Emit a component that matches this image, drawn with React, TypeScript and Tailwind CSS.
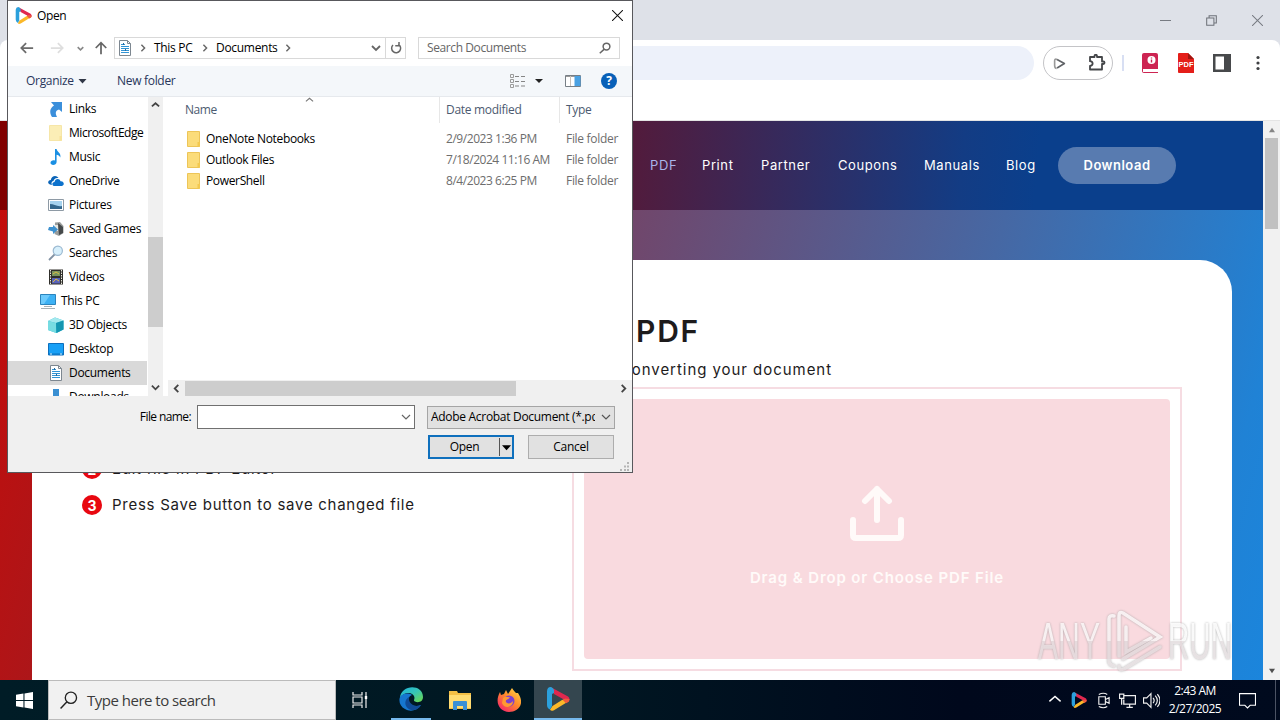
import { ReactNode } from "react"

const navLinks = [
  { label: "PDF", className: "w-[52px] text-[#a9b4ea]" },
  { label: "Print", className: "w-[59px] text-white" },
  { label: "Partner", className: "w-[77px] text-white" },
  { label: "Coupons", className: "w-[86px] text-white" },
  { label: "Manuals", className: "w-[82px] text-white" },
  { label: "Blog", className: "w-[52px] text-white" },
]

const files = [
  { name: "OneNote Notebooks", date: "2/9/2023 1:36 PM" },
  { name: "Outlook Files", date: "7/18/2024 11:16 AM" },
  { name: "PowerShell", date: "8/4/2023 6:25 PM" },
]

function Icon({ children, className = "w-4 h-4" }: { children: ReactNode, className?: string }) {
  return (
    <svg viewBox="0 0 16 16" className={`${className} shrink-0`} fill="none">{children}</svg>
  )
}

function Chevron({ dir, className = "w-2 h-2", stroke = "#555", width = 1.8 }: { dir: "up" | "down" | "left" | "right", className?: string, stroke?: string, width?: number }) {
  const paths = {
    up: "M1 6 5 2.5 9 6",
    down: "M1 3 5 7 9 3",
    left: "M7 1 3 5 7 9",
    right: "M3 1 7 5 3 9",
  }
  return (
    <svg viewBox="0 0 10 10" className={`${className} shrink-0`} fill="none" stroke={stroke} strokeWidth={width}><path d={paths[dir]} /></svg>
  )
}

function PlayLogo({ className }: { className: string }) {
  return (
    <svg viewBox="0 0 24 24" className={`${className} shrink-0`}>
      <path d="M5 .3 22 9.500q2.500 2 .8 5L20.500 16 17 12 8 7z" fill="#e0284f" />
      <path d="M23 14 8 23.300q-3 1.400-4-.8L6.500 19 16 13l4-1z" fill="#fbb829" />
      <path d="M19 11.500 23.500 12q0 2-1.500 3l-2 1.200-3-3z" fill="#ef5a3c" />
      <path d="M1 4Q1.500-.5 5.500.2 7 1 8 3v3L6 7v12l-2 3.500Q1 21 1 18z" fill="#2ba0dc" />
    </svg>
  )
}

function DocumentIcon() {
  return (
    <Icon>
      <path d="M2.500.5h8l3 3v12h-11z" fill="#fff" stroke="#7d8790" />
      <path d="M10.500.5v3h3" stroke="#7d8790" />
      <path d="M4 4.500h4M4 6.500h8M4 8.500h8M4 10.500h8M4 12.500h8" stroke="#3294d4" />
      <path d="M6.500 3v2M8.500 9v2" stroke="#27699c" />
    </Icon>
  )
}

function FolderIcon({ pale = false }: { pale?: boolean }) {
  return (
    <Icon>
      <path d="M1.500.5h12v15h-12z" fill={pale ? "#fbeeb6" : "#fbdc7a"} stroke={pale ? "#f6e6a8" : "#edc558"} />
      <path d="M11.500 11h2.500v4.500h-2.500z" fill={pale ? "#f7e39b" : "#f3c94f"} />
    </Icon>
  )
}

const sidebar: { label: string, icon: ReactNode, root?: boolean, active?: boolean }[] = [
  { label: "Links", icon: <Icon><path d="M3 1h11v10l-3-2.500C7.500 9.500 7 12 9 16H4C1 11 2 7 6 4.500z" fill="#3b8fdb" /></Icon> },
  { label: "MicrosoftEdge", icon: <FolderIcon pale /> },
  { label: "Music", icon: <Icon><path d="M7 0h1.600c.4 3 4.900 4 3.600 8.500C11.500 6.500 10 6 8.600 5.800V13c0 3.500-6.100 4-6.100.8 0-2.200 2.500-3 4.500-2.300z" fill="#1a8fe3" /></Icon> },
  { label: "OneDrive", icon: <Icon><path d="M2 11.500c-3-1-2-4.500.8-4.500C3.500 2.500 8.500 1.500 10.500 5 7.500 4.500 5.800 6 5.500 8 3.500 8.300 3 10.500 4 12z" fill="#0a64b8" /><path d="M6 13c-2.500-.5-2-4 .5-4 .5-3.500 5-4 6 -.8 3.500-.4 4.500 4 1.500 4.800z" fill="#0d72cc" /></Icon> },
  { label: "Pictures", icon: <Icon><path d="M.5 2.500h15v11H.5z" fill="#fff" stroke="#8e9aa5" /><path d="M2 4h12v8H2z" fill="#a6d3ef" /><path d="M2 7c4 0 7 3 12 2v3H2z" fill="#34688d" /></Icon> },
  { label: "Saved Games", icon: <Icon><path d="M7 1.500 12 1l3.500 4v7L11 15l-4.500-2z" fill="#9a9d9c" /><path d="M10 2l5 4v6l-4 2z" fill="#45494b" /><path d="M7 4h3v6H7z" fill="#e6e8e4" /><path d="M1 6h4V4l5 4.500L5 13v-2.500L0 9z" fill="#3d91cf" /></Icon> },
  { label: "Searches", icon: <Icon><path d="M1 15 7 9" stroke="#8292a4" strokeWidth="1.800" /><circle cx="9.800" cy="5.800" r="4.600" fill="#d7effb" stroke="#9bb9d1" strokeWidth="1.200" /></Icon> },
  { label: "Videos", icon: <Icon><path d="M1 .5h14v15H1z" fill="#302f2b" /><path d="M2.500 1v15M13.500 1v15" stroke="#e8e8dc" strokeDasharray="1.500 1" /><path d="M4 2h8v5H4z" fill="#77935d" /><path d="M4 9h8v5.500H4z" fill="#5963b8" /><path d="M5 5l3-2 3 2M5 13l3-3 3 2" stroke="#dcbd45" /></Icon> },
  { label: "This PC", root: true, icon: <Icon><path d="M.5 1.500h15v10H.5z" fill="#3db1f4" stroke="#2b84bd" /><path d="M1 2h9L4 11H1z" fill="#6ccafc" /><path d="M4 13.500h8" stroke="#a7b1b7" /><path d="M1 15.500h14" stroke="#a7b1b7" /></Icon> },
  { label: "3D Objects", icon: <Icon><path d="M0 4l7-3.500 8.500 3v9L8.500 16 0 13z" fill="#35bcd2" /><path d="M0 4l7-3.500 8.500 3L8 6z" fill="#a3e9ee" /><path d="M8 6v10l-8-3V4z" fill="#77dce2" /><path d="M8 6l7.500-2.500v9L8.500 16z" fill="#1496b1" /></Icon> },
  { label: "Desktop", icon: <Icon><path d="M.5 2.500h15v11.500H.5z" fill="#18a0f6" stroke="#0d6fbd" /><path d="M1 13h14" stroke="#0873bf" /><path d="M2 13h2M12 13h2" stroke="#d8f1ff" /></Icon> },
  { label: "Documents", active: true, icon: <DocumentIcon /> },
  { label: "Downloads", icon: <Icon><path d="M5 0h6v9h4l-7 7-7-7h4z" fill="#3a8fd2" /></Icon> },
]

function Browser() {
  return (
    <div className="flex h-[680px] flex-col bg-[#dee1e8]">
      <div className="flex h-10 shrink-0 items-center justify-end gap-[35px] pr-[17px]">
        <Icon className="w-[11px] h-[11px]"><path d="M0 8h16" stroke="#777b82" strokeWidth="1.500" /></Icon>
        <Icon className="w-[11px] h-[11px]"><path d="M1 4.500h10.500V15H1zM4.500 4V1H15v10.500h-3" stroke="#6e7279" strokeWidth="1.500" /></Icon>
        <Icon className="w-[11px] h-[11px]"><path d="M0 0l16 16M16 0 0 16" stroke="#777b82" strokeWidth="1.500" /></Icon>
      </div>
      <div className="h-[81px] shrink-0 rounded-t-lg border-b border-[#e4e4e4] bg-white pt-1.5">
        <div className="flex h-[34px] items-center">
          <div className="ml-24 h-[34px] w-[938px] rounded-r-full bg-[#edf1fa]" />
          <div className="ml-[9px] flex h-[34px] w-[70px] items-center justify-between rounded-full border border-[#c4c4c7] pl-[9px] pr-[6px]">
            <Icon className="w-[13px] h-[13px]"><path d="M5 3 14 8 5 13.500" stroke="#606367" strokeWidth="2" strokeLinejoin="round" /><path d="M5 3C2.500 2 2 3 2 5v5c0 3 .5 4 2.500 4" stroke="#999" strokeWidth="2" /></Icon>
            <svg viewBox="0 0 18 18" className="h-[18px] w-[18px]" fill="none" stroke="#444649" strokeWidth="1.800" strokeLinejoin="round"><path d="M2 3h4.500V2a1 1 0 0 1 2.500 0v1h5v4.500h1.300a1.200 1.200 0 0 1 0 2.500H14v5.500H2v-3.700c3.500-.3 3.500-4.300 0-4.600z" /></svg>
          </div>
          <div className="ml-[9px] h-4 w-0.5 bg-[#d8dff3]" />
          <svg viewBox="0 0 16 20" className="ml-[18px] h-5 w-4"><path d="M2 0h12q2 0 2 2v18H2q-2 0-2-2V2q0-2 2-2" fill="#cd2452" /><path d="M1 16h15v3H1z" fill="#fff" /><circle cx="9.500" cy="7" r="4" fill="#fff" /><path d="M9.500 6.500v3M9.500 4.500v1" stroke="#cd2452" strokeWidth="1.400" /></svg>
          <svg viewBox="0 0 16 20" className="ml-5 h-5 w-4"><path d="M1 0h9l6 6v14H1q-1 0-1-1V1q0-1 1-1" fill="#e41e19" /><path d="M10 0l6 6h-6z" fill="#9f1510" /><text x="8" y="13.500" textAnchor="middle" fill="#fff" fontFamily="Liberation Sans" fontWeight="700" fontSize="7.500">PDF</text></svg>
          <svg viewBox="0 0 18 18" className="ml-[19px] h-[18px] w-[18px]"><path d="M0 0h18v18H0z" fill="#47494b" /><path d="M2.500 2.500h8.500v13H2.500z" fill="#fff" /></svg>
          <svg viewBox="0 0 4 16" className="ml-[25px] h-4 w-1" fill="#3e4043"><circle cx="2" cy="2.500" r="1.600" /><circle cx="2" cy="8" r="1.600" /><circle cx="2" cy="13.500" r="1.600" /></svg>
        </div>
      </div>
      <div className="flex min-h-0 flex-1">
        <div className="flex w-[1263px] flex-col overflow-hidden bg-[linear-gradient(105deg,#c60b09_0%,#a8181c_15%,#70476c_47%,#4668a4_73%,#2082d5_94%,#1b85dc_100%)]">
          <header className="flex h-[89px] shrink-0 items-center bg-[linear-gradient(95deg,#800000_0%,#80040a_28%,#521b3c_50%,#133c84_76%,#0a3f8c_82%)] pl-[650px] text-[13px] tracking-[0.6px]">
            {navLinks.map((link) => (
              <a key={link.label} className={`${link.className} whitespace-nowrap`}>{link.label}</a>
            ))}
            <button className="h-[37px] w-[118px] rounded-full bg-[#587bb0] text-[13px] font-semibold tracking-[0.5px] text-white">Download</button>
          </header>
          <main className="mt-[50px] ml-8 flex w-[1200px] flex-1 rounded-t-[32px] bg-white text-[#1d1b1c]">
            <div className="w-[540px] shrink-0 pl-[50px] pt-[199px] text-[15px] tracking-[0.73px]">
              {["Edit file in PDF Editor", "Press Save button to save changed file"].map((step, i) => (
                <div key={step} className="flex h-9 items-start">
                  <span className="mr-2.5 flex h-5 w-5 items-center justify-center rounded-full bg-[#e80710] text-[14px] font-bold tracking-normal text-white">{i + 2}</span>
                  <span className="whitespace-nowrap leading-5">{step}</span>
                </div>
              ))}
            </div>
            <div className="w-[610px] shrink-0">
              <h1 className="pt-[51px] pl-[64px] text-[30px] font-semibold leading-10 tracking-[1.8px]">PDF</h1>
              <p className="flex h-[36px] w-[260px] justify-end whitespace-nowrap pt-[9px] text-[15px] leading-5 tracking-[0.95px]">Start converting your document</p>
              <div className="h-[284px] border-2 border-[#f6dce2] p-2.5">
                <div className="flex h-[260px] w-[586px] flex-col items-center rounded bg-[#f9dadf] pt-[86px] text-[#fffaf9]">
                  <svg viewBox="0 0 56 56" className="h-14 w-14" fill="none" stroke="currentColor" strokeWidth="6" strokeLinecap="round" strokeLinejoin="round"><path d="M28 35V4M16 16 28 4l12 12M4 35v15q0 3 3 3h42q3 0 3-3V35" /></svg>
                  <div className="mt-[27px] text-[15px] font-semibold leading-5 tracking-[0.88px]">Drag &amp; Drop or Choose PDF File</div>
                </div>
              </div>
            </div>
          </main>
        </div>
        <div className="flex w-[17px] flex-col items-center justify-between bg-[#f1f1f1] py-1.5">
          <div className="flex flex-col items-center gap-[5px]">
            <Icon className="h-1.5 w-2"><path d="M0 14 8 2l8 12z" fill="#858585" /></Icon>
            <div className="h-[91px] w-[13px] bg-[#c1c1c1]" />
          </div>
          <Icon className="h-1.5 w-2"><path d="M0 2 8 14 16 2z" fill="#505050" /></Icon>
        </div>
      </div>
    </div>
  )
}

function OpenDialog() {
  return (
    <div className="absolute left-[7px] top-0 flex h-[473px] w-[626px] flex-col border border-[#58585c] bg-white font-['Open_Sans','Noto_Sans',sans-serif] text-[12px] tracking-[-0.3px] text-black">
      <div className="flex h-[29px] shrink-0 items-center pl-[7px] pr-[9px]">
        <PlayLogo className="h-[17px] w-[17px]" />
        <span className="ml-[5px] flex-1 tracking-[-0.4px]">Open</span>
        <Icon className="h-[11px] w-[11px]"><path d="M0 0l16 16M16 0 0 16" stroke="#111" strokeWidth="1.500" /></Icon>
      </div>
      <div className="flex h-[36px] shrink-0 items-center">
        <Icon className="ml-3 h-[14px] w-[14px]"><path d="M15 8H2M7 2.500 1.500 8 7 13.500" stroke="#6b6b6b" strokeWidth="2" /></Icon>
        <Icon className="ml-4 h-[14px] w-[14px]"><path d="M1 8h13M9 2.500 14.500 8 9 13.500" stroke="#dedede" strokeWidth="2" /></Icon>
        <Chevron dir="down" className="ml-[13px] h-[7px] w-[7px]" stroke="#888" width={2.2} />
        <Icon className="ml-[10px] h-[14px] w-[14px]"><path d="M8 15V2M2 8l6-6 6 6" stroke="#666" strokeWidth="2" /></Icon>
        <div className="ml-1.5 flex h-[22px] w-[292px] items-center border border-[#d9d9d9] pl-[2px]">
          <DocumentIcon />
          <Chevron dir="right" className="ml-[6px] h-[8px] w-[8px]" stroke="#666" />
          <span className="ml-[7px] w-[39px] whitespace-nowrap">This PC</span>
          <Chevron dir="right" className="ml-[8px] h-[8px] w-[8px]" stroke="#666" />
          <span className="ml-[7px] w-[61px]">Documents</span>
          <Chevron dir="right" className="ml-[7px] h-[8px] w-[8px]" stroke="#666" />
          <Chevron dir="down" className="ml-auto h-[10px] w-[10px]" stroke="#666" />
          <div className="ml-[4px] flex h-5 w-[20px] items-center justify-center border-l border-[#d9d9d9]">
            <Icon className="h-3 w-3"><path d="M12 4a6 6 0 1 1-7-1M4 0v5h5" stroke="#666" strokeWidth="2" transform="matrix(-1 0 0 1 16 0)" /></Icon>
          </div>
        </div>
        <div className="ml-3 flex h-[22px] w-[202px] items-center justify-between border border-[#d9d9d9] pl-2 pr-2 text-[#666]">
          <span className="tracking-[-0.4px]">Search Documents</span>
          <Icon className="h-3 w-3"><circle cx="10" cy="6" r="4.500" stroke="#666" strokeWidth="2" /><path d="M7 9.500 1 15" stroke="#666" strokeWidth="2" /></Icon>
        </div>
      </div>
      <div className="flex h-[31px] shrink-0 items-center border-b border-[#e6e9ed] bg-[#f4f7fa] pl-[18px] pr-[15px] text-[#28365b]">
        <span className="w-[48px]">Organize</span>
        <Icon className="ml-[4px] h-2 w-[9px]"><path d="M0 4h16L8 13z" fill="#303746" /></Icon>
        <span className="ml-[30px] flex-1">New folder</span>
        <Icon><path d="M.5 1.500h3v3h-3zM.5 6.500h3v3h-3zM.5 11.500h3v3h-3z" stroke="#9b9b9b" /><path d="M5 3.500h4M11 3.500h4M5 8.500h4M11 8.500h4M5 13h4M11 13h4" stroke="#858585" /></Icon>
        <Icon className="ml-[9px] h-2 w-2"><path d="M0 4h16L8 12z" fill="#222" /></Icon>
        <Icon className="ml-[22px] h-4 w-4"><path d="M.5 2.500h15v11H.5z" fill="#fff" stroke="#777f86" /><path d="M1 3.500h14" stroke="#999" /><path d="M9.500 3h6v10h-6z" fill="#4aa1e2" /><path d="M5.500 3v10" stroke="#c9c1b9" /></Icon>
        <span className="ml-5 flex h-4 w-4 items-center justify-center rounded-full bg-[#0860b8] text-[12px] font-bold tracking-normal text-white">?</span>
      </div>
      <div className="flex h-[299px] shrink-0">
        <div className="h-[299px] w-[139px] shrink-0 overflow-hidden">
          {sidebar.map((item) => (
            <div key={item.label} className={`${item.root ? "pl-8" : "pl-10"} ${item.active ? "bg-[#d9d9d9]" : ""} flex h-6 items-center gap-[5px] whitespace-nowrap`}>
              {item.icon}
              <span className={item.label === "MicrosoftEdge" ? "tracking-[-0.45px]" : ""}>{item.label}</span>
            </div>
          ))}
        </div>
        <div className="ml-[1px] flex h-[299px] w-[15px] shrink-0 flex-col items-center bg-[#f0f0f0] py-1">
          <Chevron dir="up" className="h-[9px] w-[9px]" stroke="#444" width={2} />
          <div className="mt-[127px] h-[90px] w-[15px] bg-[#cdcdcd]" />
          <Chevron dir="down" className="mt-auto h-[9px] w-[9px]" stroke="#444" width={2} />
        </div>
        <div className="ml-[5px] flex flex-1 flex-col">
          <div className="flex h-[26px] text-[#4c5a70]">
            <div className="flex w-[272px] items-center border-r border-[#e7e7e7] pl-[17px]">
              <span className="w-[120px] tracking-[-0.45px]">Name</span>
              <Chevron dir="up" className="mb-[19px] h-[9px] w-[9px]" stroke="#777" width={1.200} />
            </div>
            <div className="flex w-[120px] items-center border-r border-[#e7e7e7] pl-1.5">Date modified</div>
            <div className="flex items-center pl-1.5">Type</div>
          </div>
          <div className="mt-[5px] flex-1">
            {files.map((file) => (
              <div key={file.name} className="flex h-[21px] items-center whitespace-nowrap pl-[18px]">
                <FolderIcon />
                <span className="ml-[4px] w-[240px] tracking-[-0.35px]">{file.name}</span>
                <span className="w-[120px] tracking-[-0.45px] text-[#6d6d6d]">{file.date}</span>
                <span className="tracking-[-0.3px] text-[#6d6d6d]">File folder</span>
              </div>
            ))}
          </div>
          <div className="flex h-4 items-center bg-[#f0f0f0] pl-1 pr-1">
            <Chevron dir="left" className="h-[9px] w-[9px]" stroke="#444" width={2} />
            <div className="ml-1 h-[15px] w-[331px] bg-[#cdcdcd]" />
            <Chevron dir="right" className="ml-auto h-[9px] w-[9px]" stroke="#444" width={2} />
          </div>
        </div>
      </div>
      <div className="flex flex-1 flex-col bg-[#f0f0f0] pt-[9px]">
        <div className="flex h-6 items-center">
          <span className="w-[183px] text-right tracking-[-0.6px]">File name:</span>
          <div className="ml-[6px] flex h-6 w-[218px] items-center justify-end border border-[#707070] bg-white pr-[3px]">
            <Chevron dir="down" className="h-[10px] w-[10px]" stroke="#666" width={1.200} />
          </div>
          <div className="ml-3 flex h-[23px] w-[188px] items-center border border-[#a5a5a5] bg-[#e1e1e1] pl-[3px] pr-[3px]">
            <span className="w-[164px] overflow-hidden whitespace-nowrap">Adobe Acrobat Document (*.pdf)</span>
            <Chevron dir="down" className="ml-auto h-[10px] w-[10px]" stroke="#555" width={1.200} />
          </div>
        </div>
        <div className="mt-1.5 flex h-6 pl-[420px]">
          <button className="flex h-6 w-[86px] items-center border-2 border-[#0f70bd] bg-[#e1e1e1]">
            <span className="flex-1">Open</span>
            <span className="flex h-[18px] w-[13px] items-center justify-center border-l border-[#555]">
              <Icon className="h-[9px] w-[9px]"><path d="M0 4h16L8 13z" fill="#000" /></Icon>
            </span>
          </button>
          <button className="ml-[14px] h-6 w-[86px] border border-[#adadad] bg-[#e1e1e1]">Cancel</button>
        </div>
        <div className="flex justify-end pr-[3px]">
          <svg viewBox="0 0 9 9" className="mt-[3px] h-[9px] w-[9px]" fill="#b5b5b5"><path d="M7 0h2v2H7zM4 3.500h2v2H4zM7 3.500h2v2H7zM0 7h2v2H0zM4 7h2v2H4zM7 7h2v2H7z" /></svg>
        </div>
      </div>
    </div>
  )
}

function Watermark() {
  return (
    <div className="absolute left-[1036px] top-[608px] flex h-[66px] w-[196px] items-center opacity-80">
      <svg viewBox="0 0 196 66" className="h-[66px] w-[196px] drop-shadow-[0_0_1px_#999]">
        <defs>
          <linearGradient id="mark" x1="0" y1="0" x2="0" y2="66" gradientUnits="userSpaceOnUse">
            <stop offset="0.500" stopColor="#fff" stopOpacity="0.900" />
            <stop offset="0.500" stopColor="#e6dfe1" stopOpacity="0.900" />
          </linearGradient>
        </defs>
        <g fill="url(#mark)" fontFamily="Liberation Sans Narrow, Liberation Sans" fontSize="51">
          <text x="2" y="51" textLength="62" lengthAdjust="spacingAndGlyphs">ANY</text>
          <text x="132" y="51" textLength="64" lengthAdjust="spacingAndGlyphs">RUN</text>
        </g>
        <path d="M78 8q-5-1-5 3v42q0 4 5 5M83 48V8q0-5 4-3l37 24-37 22M83 58q0 5 5 3l36-22M90 19v25l25-14" fill="none" stroke="url(#mark)" strokeWidth="3.500" strokeLinecap="round" />
      </svg>
    </div>
  )
}

function Taskbar() {
  return (
    <div className="flex h-10 items-center bg-[linear-gradient(90deg,#001c26_0%,#001722_45%,#00081c_75%,#000a1e_100%)] font-['Open_Sans','Noto_Sans',sans-serif] text-white">
      <div className="flex w-12 justify-center">
        <Icon className="h-[17px] w-[17px]"><path d="M0 2.500 7 1.500v6H0zM8 1.300 16 0v7.500H8zM0 8.500h7v6l-7-1zM8 8.500h8V16l-8-1.300z" fill="#fff" /></Icon>
      </div>
      <div className="flex h-10 w-[288px] items-center border border-[#bbb] bg-[#f1f1f1] pl-[11px] text-[#3b3b3b]">
        <Icon className="h-[18px] w-[18px]"><circle cx="9.700" cy="6" r="5" stroke="#222" strokeWidth="1.200" /><path d="M6.200 9.500.5 15.500" stroke="#222" strokeWidth="1.300" /></Icon>
        <span className="ml-[9px] text-[15px] tracking-[-0.5px]">Type here to search</span>
      </div>
      <div className="flex w-12 justify-center">
        <Icon><path d="M1 0v3h9V0M1 16v-3h9v3M1 5h9v6H1zM14 0v16" stroke="#eee" strokeWidth="1.200" /><path d="M12.800 4h2.400v3h-2.400z" fill="#fff" /></Icon>
      </div>
      <div className="ml-[7px] flex h-10 w-10 items-center justify-center border-b-2 border-[#76b9ed]">
        <svg viewBox="0 0 24 24" className="h-6 w-6">
          <defs><linearGradient id="edge" x2="1" y2="1"><stop stopColor="#1db4df" /><stop offset="0.500" stopColor="#37c6b5" /><stop offset="1" stopColor="#70d944" /></linearGradient></defs>
          <path d="M1 11C2-3 24-3 24 10c0 5-5 6-8 4.500-2-1-.5-2-.5-3.500C15 5 5 4 1 11" fill="url(#edge)" />
          <path d="M.5 12C1 7 9 5 13 8c-3 1-4 4-3 7 2 4 7 5 12 3-4 6-11 7-16 4C2 20 0 16 .5 12" fill="#1677cf" />
          <path d="M10 10c-7 4-3 14 5 13 3 0 6-3 7-5-7 3-13-2-12-8" fill="#104b96" />
        </svg>
      </div>
      <div className="ml-[9px] flex w-10 justify-center">
        <svg viewBox="0 0 22 20" className="h-5 w-[22px]"><path d="M0 1h8l1 2h13v16H0z" fill="#f3bf45" /><path d="M0 5h22v13H0z" fill="#ffdc72" /><path d="M4 12q0-1 1-1h12q1 0 1 1v8h-4v-4H8v4H4z" fill="#398fd5" /></svg>
      </div>
      <div className="ml-[9px] flex w-10 justify-center">
        <svg viewBox="0 0 24 24" className="h-6 w-6">
          <defs><linearGradient id="fox" x1="1" y1="0" x2="0.200" y2="1"><stop stopColor="#ffe249" /><stop offset="0.500" stopColor="#ff8b2b" /><stop offset="1" stopColor="#f5246b" /></linearGradient></defs>
          <path d="M3 4l1 3 3-1 2-4 2 4 4-6c2 3 3 4 4 5l2 0c8 12-1 19-9 19C3 24-3 15 3 4" fill="url(#fox)" />
          <circle cx="12" cy="13" r="5.500" fill="#7b41cf" /><path d="M6 10c3-3 5 0 7-1-1 3-5 2-4 5 1 2 5 2 7-1 0 7-9 8-11 2z" fill="#ff9932" />
        </svg>
      </div>
      <div className="ml-[5px] flex h-10 w-12 items-center justify-center border-b-2 border-[#76b9ed] bg-[#34464f]">
        <PlayLogo className="h-6 w-6" />
      </div>
      <div className="ml-auto flex items-center">
        <Chevron dir="up" className="h-[14px] w-[14px]" stroke="#fff" width={1} />
        <PlayLogo className="ml-[9px] h-4 w-4" />
        <Icon className="ml-[9px] h-[17px] w-[15px]"><path d="M3 4h7v8H3zM10 7l4-2v6l-4-2M3 1.500Q8-1 12 1.500M3 14.500Q8 17 12 14.500" stroke="#eee" strokeWidth="1.200" /></Icon>
        <Icon className="ml-[8px] h-[17px] w-[17px]"><path d="M5 3.500h10.500v8H4.500V7M7 14.500h6M10 12v2.500M.5 2h4v4h-4zM2.500 6v6" stroke="#eee" strokeWidth="1.200" /></Icon>
        <Icon className="ml-[7px] h-[17px] w-[17px]"><path d="M.5 5.500h3l4-4v13l-4-4h-3zM9.500 5.500q2 2.500 0 5M11.500 3.500q4 4.500 0 9M13.500 2q5 6 0 12" stroke="#eee" strokeWidth="1.100" /></Icon>
        <div className="ml-[7px] w-[56px] whitespace-nowrap text-center text-[12px] leading-[18px] tracking-[-0.5px]">
          <div>2:43 AM</div>
          <div>2/27/2025</div>
        </div>
        <Icon className="ml-[16px] h-[17px] w-[17px]"><path d="M.5 1.500h15v11h-5L8 15l-2.500-2.500h-5z" stroke="#fff" /></Icon>
        <div className="ml-[19px] h-10 w-px bg-[#4b5364]" />
        <div className="w-[4px]" />
      </div>
    </div>
  )
}

export default function App() {
  return (
    <div className="relative h-[720px] w-[1280px] overflow-hidden font-['Inter','Open_Sans',sans-serif]">
      <Browser />
      <Taskbar />
      <OpenDialog />
      <Watermark />
    </div>
  )
}
